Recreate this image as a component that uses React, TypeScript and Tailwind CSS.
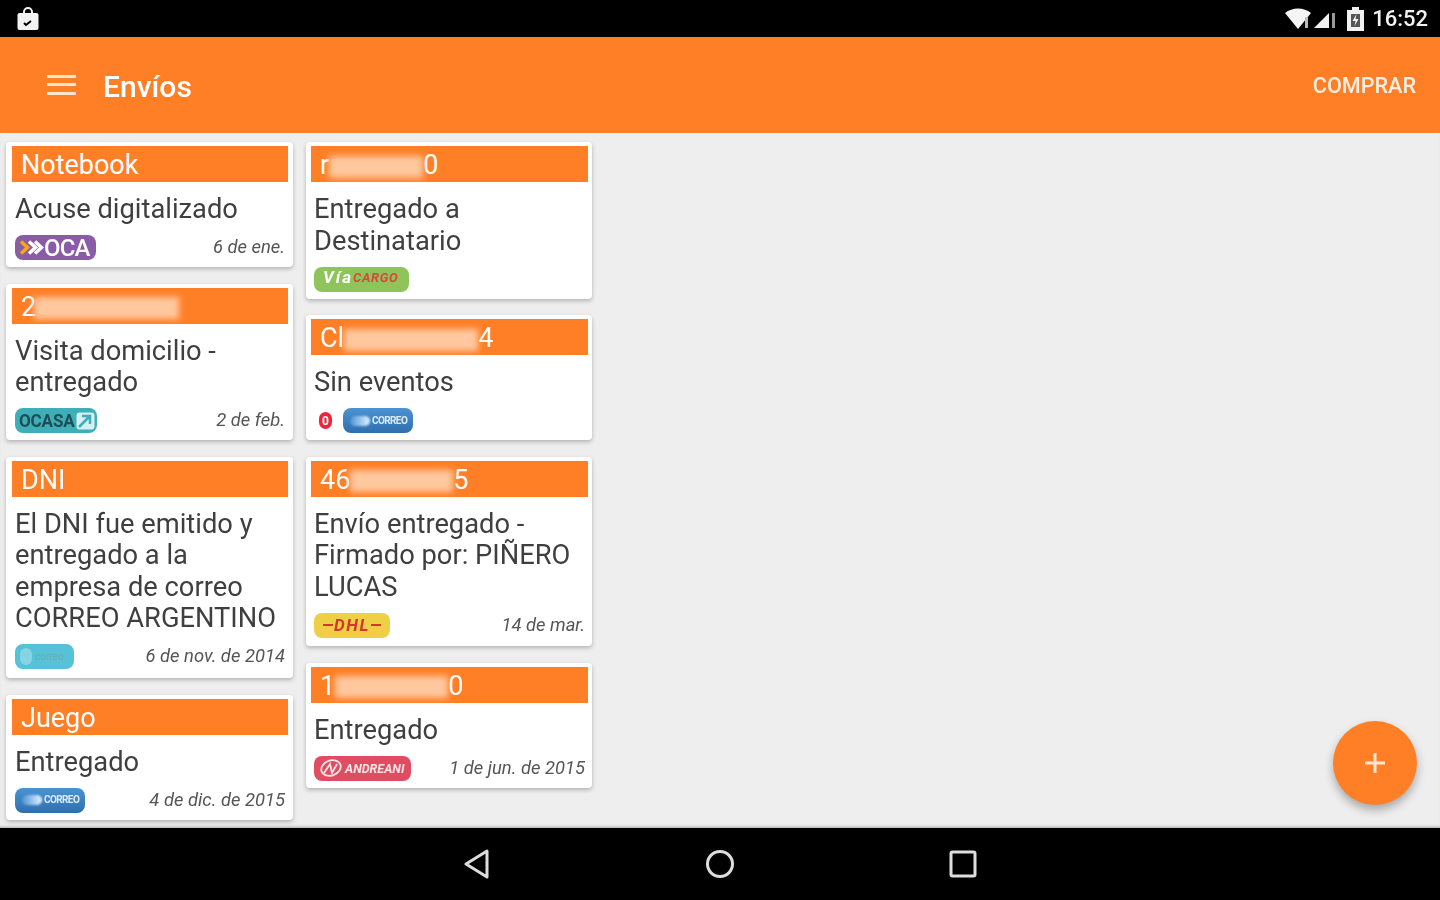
import { FC, ReactNode } from "react";

const font = { fontFamily: "Roboto, sans-serif" };

const Pill: FC<{ className: string; children?: ReactNode }> = ({ className, children }) => (
	<div className={`h-[25px] rounded-[8px] flex items-center overflow-hidden shrink-0 ${className}`}>{children}</div>
);

const OcaLogo = () => (
	<Pill className="w-[81px] bg-[#8a5ba6] pl-[5px]">
		<svg width="24" height="15" viewBox="0 0 24 15" fill="none" strokeWidth="3.500">
			<path d="M1 1.500 7.500 7.500 1 13.500" stroke="#f5a623" />
			<path d="M9 1.500 15.500 7.500 9 13.500" stroke="#ffffff" />
			<path d="M15 1.500 21.500 7.500 15 13.500" stroke="#ffffff" />
		</svg>
		<span className="text-white font-medium text-[24px] leading-none tracking-[-0.8px]">OCA</span>
	</Pill>
);

const OcasaLogo = () => (
	<Pill className="w-[82px] bg-[#3eaeb8] pl-[4px]">
		<span className="text-[#1f4e55] font-bold text-[19px] leading-none tracking-[-0.2px] scale-x-90 origin-left w-[57px]">OCASA</span>
		<svg width="19" height="18" viewBox="0 0 19 18" fill="none">
			<rect x="0.500" y="0.500" width="18" height="17" rx="3" fill="#d5f0f2" />
			<path d="M3 15 14 4M6 4h8v8" stroke="#3eaeb8" strokeWidth="2.500" />
		</svg>
	</Pill>
);

const CorreoLogo = () => (
	<Pill className="w-[70px] bg-gradient-to-b from-[#4b93d3] to-[#2f6fae] pl-[7px] gap-[2px]">
		<span className="w-[20px] h-[10px] rounded-full bg-gradient-to-r from-[#4b93d3] to-[#e4f5ff] blur-[1px]" />
		<span className="text-[#dcebf7] text-[10px] leading-none font-bold tracking-[-0.6px] blur-[0.4px]">CORREO</span>
	</Pill>
);

const CyanLogo = () => (
	<Pill className="w-[59px] bg-[#55c2d8] pl-[5px] gap-[3px]">
		<span className="w-[12px] h-[17px] rounded-full bg-[#86d3e4] blur-[0.5px]" />
		<span className="text-[#6fa9b5] text-[10px] leading-none blur-[0.6px]">correo</span>
	</Pill>
);

const ViaLogo = () => (
	<Pill className="w-[95px] bg-[#8fc45a] pl-[9px] pb-[3px]">
		<span className="text-white font-bold italic text-[17px] leading-none tracking-[2px]">Vía</span>
		<span className="text-[#d8483c] font-bold italic text-[13px] leading-none tracking-[0.6px]">CARGO</span>
	</Pill>
);

const DhlLogo = () => (
	<Pill className="w-[76px] bg-[#eecf45] justify-center gap-[1px]">
		<span className="w-[10px] h-[2px] bg-[#cf3a2a]" />
		<span className="text-[#cf3a2a] font-bold italic text-[17px] leading-none tracking-[1.5px]">DHL</span>
		<span className="w-[10px] h-[2px] bg-[#cf3a2a]" />
	</Pill>
);

const AndreaniLogo = () => (
	<Pill className="w-[97px] bg-[#e04c61] pl-[5px] gap-[2px]">
		<svg width="24" height="18" viewBox="0 0 24 18" fill="none" stroke="#fbe3e6" strokeWidth="1.800">
			<ellipse cx="12" cy="9" rx="10" ry="7.500" transform="rotate(-20 12 9)" />
			<path d="M5 14 11 5l2 9 5-9" />
		</svg>
		<span className="text-[#fbe3e6] font-bold italic text-[12.500px] leading-none mt-[2px]">ANDREANI</span>
	</Pill>
);

interface cardType {
	title: ReactNode;
	text: string[];
	logo: ReactNode;
	date?: string;
}

const Hidden: FC<{ w: string; className?: string }> = ({ w, className }) => (
	<span className={`inline-block h-[22px] ${w} bg-[#ffc89f] blur-[3px] align-middle ${className ?? ""}`} />
);

const col1: cardType[] = [
	{ title: "Notebook", text: ["Acuse digitalizado"], logo: <OcaLogo />, date: "6 de ene." },
	{
		title: (
			<>
				2<Hidden w="w-[145px]" className="-ml-[2px]" />
			</>
		),
		text: ["Visita domicilio -", "entregado"],
		logo: <OcasaLogo />,
		date: "2 de feb.",
	},
	{
		title: "DNI",
		text: ["El DNI fue emitido y", "entregado a la", "empresa de correo", "CORREO ARGENTINO"],
		logo: <CyanLogo />,
		date: "6 de nov. de 2014",
	},
	{ title: "Juego", text: ["Entregado"], logo: <CorreoLogo />, date: "4 de dic. de 2015" },
];

const col2: cardType[] = [
	{
		title: (
			<>
				r<Hidden w="w-[94px]" />0
			</>
		),
		text: ["Entregado a", "Destinatario"],
		logo: <ViaLogo />,
	},
	{
		title: (
			<>
				Cl<Hidden w="w-[134px]" />4
			</>
		),
		text: ["Sin eventos"],
		logo: (
			<div className="flex items-center gap-[11px] pl-[5px]">
				<span className="w-[13px] h-[17px] rounded-full bg-[#f0233f] text-white text-[12px] font-bold leading-none flex items-center justify-center">0</span>
				<CorreoLogo />
			</div>
		),
	},
	{
		title: (
			<>
				46<Hidden w="w-[103px]" />5
			</>
		),
		text: ["Envío entregado -", "Firmado por: PIÑERO", "LUCAS"],
		logo: <DhlLogo />,
		date: "14 de mar.",
	},
	{
		title: (
			<>
				1<Hidden w="w-[113px]" />0
			</>
		),
		text: ["Entregado"],
		logo: <AndreaniLogo />,
		date: "1 de jun. de 2015",
	},
];

const Card: FC<{ item: cardType; className: string }> = ({ item, className }) => (
	<div className={`bg-white rounded-[4px] shadow-[0_2px_4px_rgba(0,0,0,0.25)] pt-[4px] ${className}`}>
		<div className="h-9 bg-[#ff7f27] text-white text-[27px] leading-[39px] pl-[9px] whitespace-nowrap overflow-hidden">
			{item.title}
		</div>
		<div className="mt-[12px] pl-[3px] text-[#3f3f3f] text-[27.3px] leading-[31.5px]">
			{item.text.map((line) => (
				<div key={line} className="whitespace-nowrap">
					{line}
				</div>
			))}
		</div>
		<div className="mt-[9.5px] pl-[3px] pr-[3px] flex items-center justify-between">
			{item.logo}
			{item.date && <span className="italic text-[#555555] text-[18.4px] leading-none">{item.date}</span>}
		</div>
	</div>
);

const StatusBar = () => (
	<div className="h-[37px] bg-black flex items-center shrink-0 pl-[17px] pr-[12px] text-white">
		<svg width="22" height="24" viewBox="0 0 22 24" fill="none" className="blur-[0.7px]">
			<path d="M7 7V5a4 4 0 0 1 8 0v2" stroke="#f2f2f2" strokeWidth="2" />
			<rect x="0.500" y="6" width="21" height="17" rx="2" fill="#f2f2f2" />
			<path d="m7 16 2 2 5-4" stroke="#000" strokeWidth="2" />
		</svg>
		<div className="ml-auto flex items-center blur-[0.7px]">
			<svg width="27" height="22" viewBox="0 0 27 22">
				<path d="M0 5C7-1 19-1 26 5L13 21Z" fill="#f5f5f5" />
				<rect x="20" y="9" width="3" height="11" fill="#bbbbbb" />
			</svg>
			<svg width="22" height="20" viewBox="0 0 22 20" className="ml-[2px]">
				<path d="M0 19 15 4v15Z" fill="#f0f0f0" />
				<rect x="18" y="4" width="3" height="15" fill="#999999" />
			</svg>
			<svg width="17" height="24" viewBox="0 0 17 24" className="ml-[11px]">
				<path d="M5 0h7v3h5v21H0V3h5Z" fill="#f2f2f2" />
				<rect x="4" y="7" width="9" height="13" fill="#555555" />
				<path d="M9.500 7 5.500 14h3l-1 5 4-7h-3Z" fill="#f2f2f2" />
			</svg>
			<span className="ml-[8px] font-medium text-[22px] leading-none text-[#f2f2f2]">16:52</span>
		</div>
	</div>
);

const Toolbar = () => (
	<div className="h-[96px] bg-[#ff7f27] shrink-0 pl-[47px] pr-[24px] text-white flex items-center">
		<div className="flex-1 flex items-center blur-[0.7px]">
			<svg width="29" height="20" viewBox="0 0 29 20" fill="#ffe5d0">
				<rect y="0" width="29" height="3" />
				<rect y="8" width="29" height="3" />
				<rect y="17" width="29" height="3" />
			</svg>
			<span className="ml-[27px] text-[30px] font-medium leading-none pt-[3px]">Envíos</span>
			<span className="ml-auto text-[21.6px] font-medium leading-none text-[#ffeee0] pt-[2px]">COMPRAR</span>
		</div>
	</div>
);

const NavBar = () => (
	<div className="h-[72px] bg-black flex items-center justify-center shrink-0">
		<div className="w-[243px] flex justify-center blur-[0.7px]">
			<svg width="28" height="32" viewBox="0 0 28 32" fill="none" stroke="#dddddd" strokeWidth="3" strokeLinejoin="round">
				<path d="M24 3v26L3 16Z" />
			</svg>
		</div>
		<div className="w-[243px] flex justify-center blur-[0.7px]">
			<svg width="30" height="30" viewBox="0 0 30 30" fill="none" stroke="#dddddd" strokeWidth="3">
				<circle cx="15" cy="15" r="12.500" />
			</svg>
		</div>
		<div className="w-[243px] flex justify-center blur-[0.7px]">
			<svg width="28" height="28" viewBox="0 0 28 28" fill="none" stroke="#dddddd" strokeWidth="3" strokeLinejoin="round">
				<rect x="2" y="2" width="24" height="24" rx="1.500" />
			</svg>
		</div>
	</div>
);

const App = () => {
	return (
		<div className="w-[1440px] h-[900px] flex flex-col overflow-hidden bg-[#eeeeee]" style={font}>
			<StatusBar />
			<Toolbar />
			<div className="relative flex-1 flex gap-[13px] pt-[9px] pl-[6px] bg-[#eeeeee] shadow-[inset_0_-3px_3px_-2px_rgba(0,0,0,0.3)]">
				<div className="w-[287px] flex flex-col gap-[16.5px] blur-[0.7px]">
					{col1.map((item, i) => (
						<Card key={i} item={item} className={i === 2 ? "pl-[6px] pr-[5px] pb-[9px]" : "pl-[6px] pr-[5px] pb-[7px]"} />
					))}
				</div>
				<div className="w-[286px] flex flex-col gap-[16.5px] blur-[0.7px]">
					{col2.map((item, i) => (
						<Card key={i} item={item} className={i === 2 ? "pl-[5px] pr-[4px] pb-[8.5px]" : "pl-[5px] pr-[4px] pb-[7px]"} />
					))}
				</div>
				<button className="absolute left-[1333px] top-[588px] w-[84px] h-[84px] rounded-full bg-[#ff7f27] shadow-[0_5px_10px_rgba(0,0,0,0.3)] flex items-center justify-center">
					<svg width="22" height="22" viewBox="0 0 22 22" fill="#ffe5d0" className="blur-[0.5px]">
						<rect x="9.500" y="1" width="3" height="20" />
						<rect x="1" y="9.500" width="20" height="3" />
					</svg>
				</button>
			</div>
			<NavBar />
		</div>
	);
};

export default App;
